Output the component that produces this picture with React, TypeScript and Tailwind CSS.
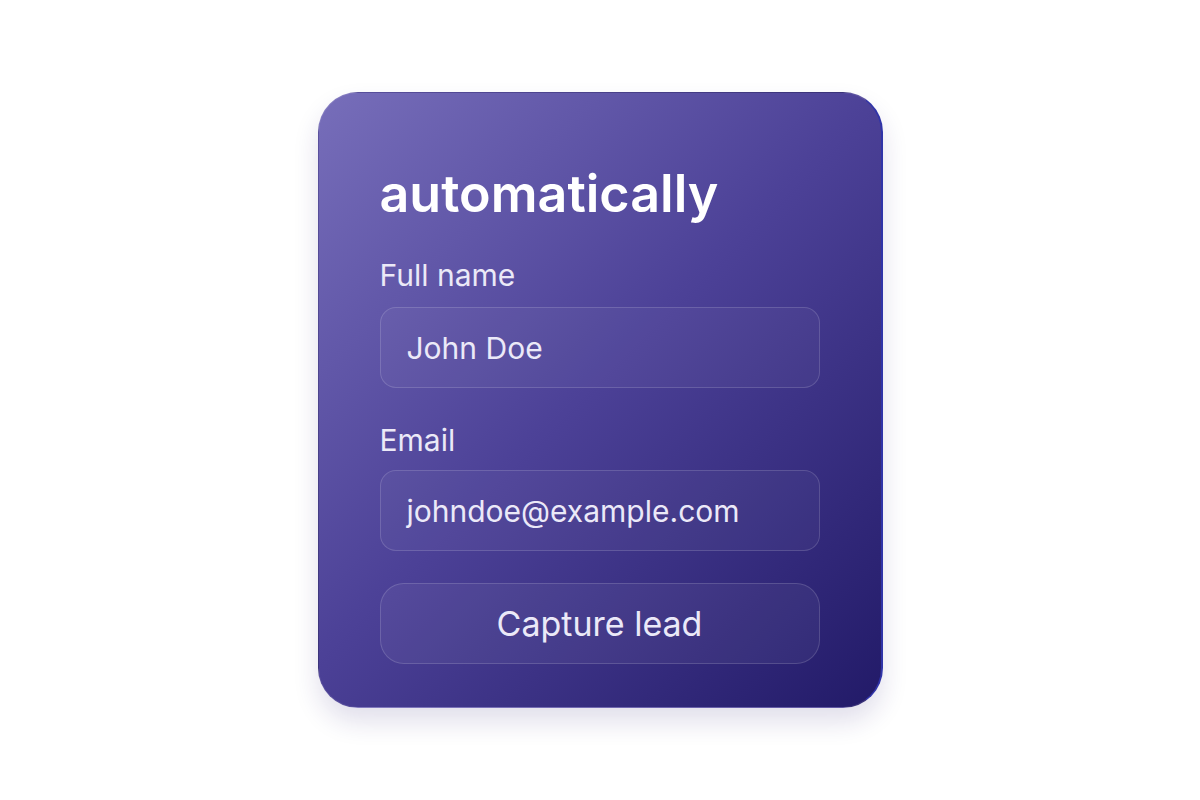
import React from 'react';

const font = { fontFamily: 'Inter, "Noto Sans", sans-serif' };

const Field: React.FC<{ label: string; value: string; first?: boolean }> = ({ label, value, first }) => (
  <div className={first ? 'mt-[33px]' : 'mt-[34px]'}>
    <div className="text-[30px] leading-[36px] text-[#ebe9f7]">{label}</div>
    <div className={`${first ? 'mt-[14px]' : 'mt-[12px]'} h-[81px] rounded-[16px] border border-white/15 bg-white/[0.04] flex items-center pl-[26px]`}>
      <span className="text-[30px] leading-none text-[#ebe9f8]">{value}</span>
    </div>
  </div>
);

export default function App() {
  return (
    <div className="w-full h-[800px] bg-white flex justify-center pt-[92px]" style={font}>
      <div className="w-[565px] h-[616px] rounded-[40px] border border-white/10 border-r-2 border-r-[#3034a8] bg-[linear-gradient(135deg,#776eba_0%,#4c4197_48%,#221a68_100%)] shadow-[0_14px_26px_rgba(40,30,110,0.14)] px-[61px] pt-[71px]">
        <h1 className="text-[52px] leading-[60px] font-semibold text-white">automatically</h1>
        <Field label="Full name" value="John Doe" first />
        <Field label="Email" value="johndoe@example.com" />
        <button className="mt-[32px] w-full h-[81px] rounded-[24px] border border-white/15 bg-white/[0.05] text-[34px] leading-none text-[#ebe9f8]">
          Capture lead
        </button>
      </div>
    </div>
  );
}
